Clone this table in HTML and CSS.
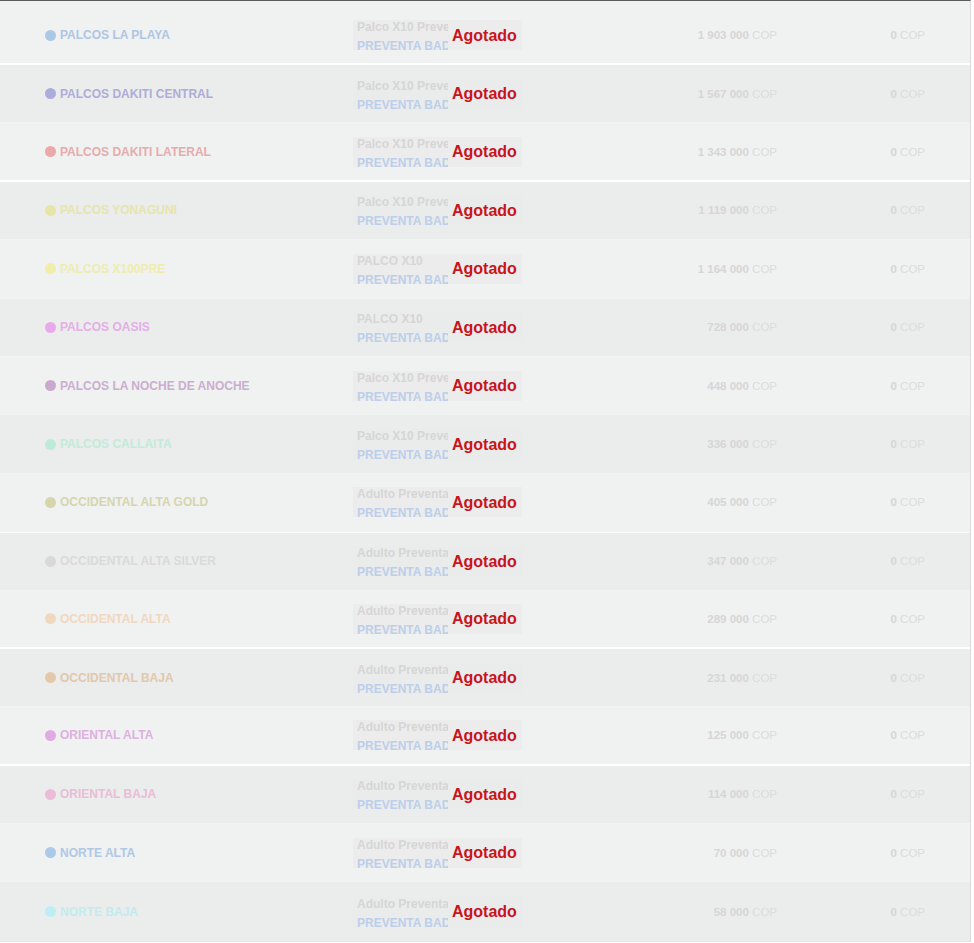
FILE: index.html
```html
<!DOCTYPE html>
<html lang="es">
<head>
<meta charset="utf-8">
<title>Localidades</title>
<link rel="stylesheet" href="styles.css">
</head>
<body>
<div class="table">
  <div class="row odd first line-w">
    <div class="name" style="color:#adc6e2"><span class="dot" style="background:#abc8e6"></span>PALCOS LA PLAYA</div>
    <div class="desc"><div class="d1">Palco X10 Preventa</div><div class="d2">PREVENTA BADBUNNY</div><div class="badge">Agotado</div></div>
    <div class="price"><b>1 903 000</b> COP</div>
    <div class="fee"><b>0</b> COP</div>
  </div>
  <div class="row even">
    <div class="name" style="color:#adadd8"><span class="dot" style="background:#acacda"></span>PALCOS DAKITI CENTRAL</div>
    <div class="desc"><div class="d1">Palco X10 Preventa</div><div class="d2">PREVENTA BADBUNNY</div><div class="badge">Agotado</div></div>
    <div class="price"><b>1 567 000</b> COP</div>
    <div class="fee"><b>0</b> COP</div>
  </div>
  <div class="row odd line-w">
    <div class="name" style="color:#e6acac"><span class="dot" style="background:#eaa9a9"></span>PALCOS DAKITI LATERAL</div>
    <div class="desc"><div class="d1">Palco X10 Preventa</div><div class="d2">PREVENTA BADBUNNY</div><div class="badge">Agotado</div></div>
    <div class="price"><b>1 343 000</b> COP</div>
    <div class="fee"><b>0</b> COP</div>
  </div>
  <div class="row even">
    <div class="name" style="color:#e6e5ac"><span class="dot" style="background:#e8e6a6"></span>PALCOS YONAGUNI</div>
    <div class="desc"><div class="d1">Palco X10 Preventa</div><div class="d2">PREVENTA BADBUNNY</div><div class="badge">Agotado</div></div>
    <div class="price"><b>1 119 000</b> COP</div>
    <div class="fee"><b>0</b> COP</div>
  </div>
  <div class="row odd">
    <div class="name" style="color:#eeedae"><span class="dot" style="background:#f0eea8"></span>PALCOS X100PRE</div>
    <div class="desc"><div class="d1">PALCO X10</div><div class="d2">PREVENTA BADBUNNY</div><div class="badge">Agotado</div></div>
    <div class="price"><b>1 164 000</b> COP</div>
    <div class="fee"><b>0</b> COP</div>
  </div>
  <div class="row even">
    <div class="name" style="color:#e4aee6"><span class="dot" style="background:#e8aaea"></span>PALCOS OASIS</div>
    <div class="desc"><div class="d1">PALCO X10</div><div class="d2">PREVENTA BADBUNNY</div><div class="badge">Agotado</div></div>
    <div class="price"><b>728 000</b> COP</div>
    <div class="fee"><b>0</b> COP</div>
  </div>
  <div class="row odd">
    <div class="name" style="color:#cbaecf"><span class="dot" style="background:#c9aacd"></span>PALCOS LA NOCHE DE ANOCHE</div>
    <div class="desc"><div class="d1">Palco X10 Preventa</div><div class="d2">PREVENTA BADBUNNY</div><div class="badge">Agotado</div></div>
    <div class="price"><b>448 000</b> COP</div>
    <div class="fee"><b>0</b> COP</div>
  </div>
  <div class="row even">
    <div class="name" style="color:#c2ebd9"><span class="dot" style="background:#bcecd8"></span>PALCOS CALLAITA</div>
    <div class="desc"><div class="d1">Palco X10 Preventa</div><div class="d2">PREVENTA BADBUNNY</div><div class="badge">Agotado</div></div>
    <div class="price"><b>336 000</b> COP</div>
    <div class="fee"><b>0</b> COP</div>
  </div>
  <div class="row odd">
    <div class="name" style="color:#d6d6ae"><span class="dot" style="background:#d6d6aa"></span>OCCIDENTAL ALTA GOLD</div>
    <div class="desc"><div class="d1">Adulto Preventa</div><div class="d2">PREVENTA BADBUNNY</div><div class="badge">Agotado</div></div>
    <div class="price"><b>405 000</b> COP</div>
    <div class="fee"><b>0</b> COP</div>
  </div>
  <div class="row even line-w-top">
    <div class="name" style="color:#dadada"><span class="dot" style="background:#d9d9d9"></span>OCCIDENTAL ALTA SILVER</div>
    <div class="desc"><div class="d1">Adulto Preventa</div><div class="d2">PREVENTA BADBUNNY</div><div class="badge">Agotado</div></div>
    <div class="price"><b>347 000</b> COP</div>
    <div class="fee"><b>0</b> COP</div>
  </div>
  <div class="row odd line-w">
    <div class="name" style="color:#f0d8c0"><span class="dot" style="background:#f0d8be"></span>OCCIDENTAL ALTA</div>
    <div class="desc"><div class="d1">Adulto Preventa</div><div class="d2">PREVENTA BADBUNNY</div><div class="badge">Agotado</div></div>
    <div class="price"><b>289 000</b> COP</div>
    <div class="fee"><b>0</b> COP</div>
  </div>
  <div class="row even">
    <div class="name" style="color:#e2c8ac"><span class="dot" style="background:#e4c8aa"></span>OCCIDENTAL BAJA</div>
    <div class="desc"><div class="d1">Adulto Preventa</div><div class="d2">PREVENTA BADBUNNY</div><div class="badge">Agotado</div></div>
    <div class="price"><b>231 000</b> COP</div>
    <div class="fee"><b>0</b> COP</div>
  </div>
  <div class="row odd line-w">
    <div class="name" style="color:#deb0e0"><span class="dot" style="background:#e0abe2"></span>ORIENTAL ALTA</div>
    <div class="desc"><div class="d1">Adulto Preventa</div><div class="d2">PREVENTA BADBUNNY</div><div class="badge">Agotado</div></div>
    <div class="price"><b>125 000</b> COP</div>
    <div class="fee"><b>0</b> COP</div>
  </div>
  <div class="row even">
    <div class="name" style="color:#eabcd6"><span class="dot" style="background:#ecbbd8"></span>ORIENTAL BAJA</div>
    <div class="desc"><div class="d1">Adulto Preventa</div><div class="d2">PREVENTA BADBUNNY</div><div class="badge">Agotado</div></div>
    <div class="price"><b>114 000</b> COP</div>
    <div class="fee"><b>0</b> COP</div>
  </div>
  <div class="row odd">
    <div class="name" style="color:#aec8e6"><span class="dot" style="background:#abc9e8"></span>NORTE ALTA</div>
    <div class="desc"><div class="d1">Adulto Preventa</div><div class="d2">PREVENTA BADBUNNY</div><div class="badge">Agotado</div></div>
    <div class="price"><b>70 000</b> COP</div>
    <div class="fee"><b>0</b> COP</div>
  </div>
  <div class="row even last">
    <div class="name" style="color:#c0ecf0"><span class="dot" style="background:#bceef2"></span>NORTE BAJA</div>
    <div class="desc"><div class="d1">Adulto Preventa</div><div class="d2">PREVENTA BADBUNNY</div><div class="badge">Agotado</div></div>
    <div class="price"><b>58 000</b> COP</div>
    <div class="fee"><b>0</b> COP</div>
  </div>
</div>
</body>
</html>
```

FILE: styles.css
```css
html, body {
  margin: 0;
  padding: 0;
  background: #ffffff;
}

body {
  font-family: "Liberation Sans", Arial, sans-serif;
}

.table {
  width: 970px;
  border-top: 1px solid #5a5a5a;
  border-right: 1px solid #dcdcdc;
  border-bottom: 1px solid #e4e4e4;
}

.row {
  display: flex;
  align-items: center;
  height: 58.4px;
  box-sizing: border-box;
  border-bottom: 1px solid #f2f3f3;
}

.row.first {
  height: 64px;
  padding-top: 6px;
}

.row.line-w {
  border-bottom: 2px solid #ffffff;
}

.row.line-w-top {
  border-top: 1px solid #fafafa;
}

.row.last {
  border-bottom: none;
}

.odd {
  background: #f0f1f1;
}

.even {
  background: #ebecec;
}

.name {
  width: 353px;
  box-sizing: border-box;
  padding-left: 45px;
  display: flex;
  align-items: center;
  gap: 4px;
  font-size: 12px;
  font-weight: bold;
  white-space: nowrap;
}

.dot {
  width: 11px;
  height: 11px;
  border-radius: 50%;
  flex: none;
}

.desc {
  position: relative;
  width: 169px;
  height: 30px;
  box-sizing: border-box;
  padding-left: 4px;
  background: #ececec;
  white-space: nowrap;
  font-size: 12px;
  font-weight: bold;
  line-height: 19px;
}

.even .desc {
  background: #eaebeb;
}

.d1, .d2 {
  width: 91px;
  overflow: hidden;
}

.d1 {
  color: #d6d6d6;
  margin-top: -2px;
}

.d2 {
  color: #bccfea;
}

.badge {
  position: absolute;
  left: 95px;
  top: 0;
  right: 0;
  bottom: 0;
  display: flex;
  align-items: center;
  padding-left: 4px;
  padding-top: 1px;
  background: #ececec;
  color: #c8141b;
  font-size: 16px;
  font-weight: bold;
  line-height: 1;
}

.even .badge {
  background: #eaebeb;
}

.price {
  width: 255px;
  text-align: right;
  font-size: 11.5px;
  color: #dcdcdc;
  white-space: nowrap;
}

.fee {
  width: 148px;
  text-align: right;
  font-size: 11.5px;
  color: #dcdcdc;
  white-space: nowrap;
}

.price b, .fee b {
  color: #d6d6d6;
}
```
